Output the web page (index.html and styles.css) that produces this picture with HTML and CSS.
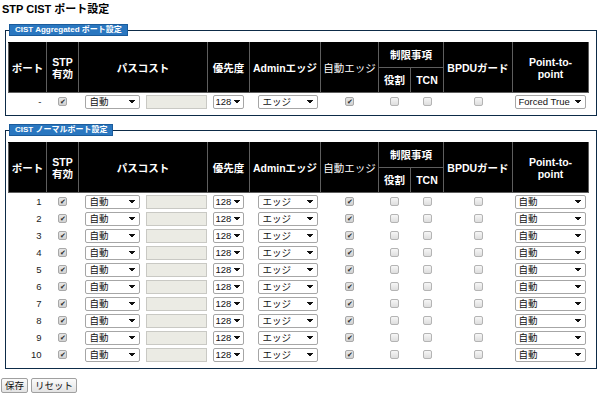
FILE: index.html
```html
<!DOCTYPE html>
<html lang="ja">
<head>
    <meta charset="UTF-8">
    <title>STP CIST ポート設定</title>
    <link rel="stylesheet" href="styles.css">
</head>
<body>
    <h1 class="page-title">STP CIST ポート設定</h1>

    <form class="stp-form">
        <fieldset class="port-group">
            <legend>CIST Aggregated ポート設定</legend>
            <table class="port-table">
                <colgroup>
                    <col class="c-port"><col class="c-stp"><col class="c-cost"><col class="c-prio"><col class="c-admin">
                    <col class="c-auto"><col class="c-role"><col class="c-tcn"><col class="c-bpdu"><col class="c-p2p">
                </colgroup>
                <thead>
                    <tr>
                        <th rowspan="2">ポート</th>
                        <th rowspan="2">STP<br>有効</th>
                        <th rowspan="2">パスコスト</th>
                        <th rowspan="2">優先度</th>
                        <th rowspan="2">Adminエッジ</th>
                        <th rowspan="2" class="th-light">自動エッジ</th>
                        <th colspan="2">制限事項</th>
                        <th rowspan="2">BPDUガード</th>
                        <th rowspan="2">Point-to-<br>point</th>
                    </tr>
                    <tr>
                        <th>役割</th>
                        <th>TCN</th>
                    </tr>
                </thead>
                <tbody>
                    <tr>
                        <td class="port-no">-</td>
                        <td class="chk"><input type="checkbox" checked></td>
                        <td class="cost"><select class="sel-cost"><option>自動</option><option>指定</option></select><input type="text" class="cost-value" disabled></td>
                        <td class="prio"><select class="sel-prio"><option>112</option><option selected>128</option><option>144</option></select></td>
                        <td class="admin"><select class="sel-admin"><option>エッジ</option><option>非エッジ</option></select></td>
                        <td class="chk"><input type="checkbox" checked></td>
                        <td class="chk"><input type="checkbox"></td>
                        <td class="chk"><input type="checkbox"></td>
                        <td class="chk"><input type="checkbox"></td>
                        <td class="p2p"><select class="sel-p2p"><option>自動</option><option selected>Forced True</option><option>Forced False</option></select></td>
                    </tr>
                </tbody>
            </table>
        </fieldset>

        <fieldset class="port-group">
            <legend>CIST ノーマルポート設定</legend>
            <table class="port-table">
                <colgroup>
                    <col class="c-port"><col class="c-stp"><col class="c-cost"><col class="c-prio"><col class="c-admin">
                    <col class="c-auto"><col class="c-role"><col class="c-tcn"><col class="c-bpdu"><col class="c-p2p">
                </colgroup>
                <thead>
                    <tr>
                        <th rowspan="2">ポート</th>
                        <th rowspan="2">STP<br>有効</th>
                        <th rowspan="2">パスコスト</th>
                        <th rowspan="2">優先度</th>
                        <th rowspan="2">Adminエッジ</th>
                        <th rowspan="2" class="th-light">自動エッジ</th>
                        <th colspan="2">制限事項</th>
                        <th rowspan="2">BPDUガード</th>
                        <th rowspan="2">Point-to-<br>point</th>
                    </tr>
                    <tr>
                        <th>役割</th>
                        <th>TCN</th>
                    </tr>
                </thead>
                <tbody id="normalPorts"></tbody>
            </table>
        </fieldset>

        <div class="form-actions">
            <button type="submit" class="btn">保存</button>
            <button type="reset" class="btn">リセット</button>
        </div>
    </form>

    <script>
        // Build rows for the normal ports
        const body = document.getElementById('normalPorts');
        for (let i = 1; i <= 10; i++) {
            const row = document.createElement('tr');
            row.innerHTML =
                '<td class="port-no">' + i + '</td>' +
                '<td class="chk"><input type="checkbox" checked></td>' +
                '<td class="cost"><select class="sel-cost"><option>自動</option><option>指定</option></select><input type="text" class="cost-value" disabled></td>' +
                '<td class="prio"><select class="sel-prio"><option>112</option><option selected>128</option><option>144</option></select></td>' +
                '<td class="admin"><select class="sel-admin"><option>エッジ</option><option>非エッジ</option></select></td>' +
                '<td class="chk"><input type="checkbox" checked></td>' +
                '<td class="chk"><input type="checkbox"></td>' +
                '<td class="chk"><input type="checkbox"></td>' +
                '<td class="chk"><input type="checkbox"></td>' +
                '<td class="p2p"><select class="sel-p2p"><option selected>自動</option><option>Forced True</option><option>Forced False</option></select></td>';
            body.appendChild(row);
        }
    </script>
</body>
</html>
```

FILE: styles.css
```css
body {
    margin: 0;
    padding: 0;
    background: #ffffff;
    color: #222222;
    font-family: "Liberation Sans", "Noto Sans CJK JP", sans-serif;
    font-size: 10px;
}

.page-title {
    margin: 0;
    padding: 2px 2px 0;
    font-size: 11px;
    line-height: 14px;
    font-weight: bold;
    color: #000000;
}

.port-group {
    margin: 8px 3px 0 5px;
    padding: 6px 9px 5px 2px;
    border: 1px solid #0d2b48;
    min-width: 0;
}

.port-group legend {
    margin-left: 1px;
    padding: 1px 5px;
    background: #2a77c0;
    border: 1px solid #1b5c9c;
    color: #ffffff;
    font-size: 8px;
    line-height: 8px;
    font-weight: bold;
}

.port-table {
    width: 580px;
    table-layout: fixed;
    border-collapse: collapse;
}

.c-port { width: 38px; }
.c-stp { width: 32px; }
.c-cost { width: 129px; }
.c-prio { width: 42px; }
.c-admin { width: 71px; }
.c-auto { width: 58px; }
.c-role { width: 32px; }
.c-tcn { width: 33px; }
.c-bpdu { width: 69px; }
.c-p2p { width: 76px; }

.port-table th {
    height: 24px;
    padding: 0;
    background: #000000;
    border: 1px solid #5e5e5e;
    color: #ffffff;
    font-size: 10.5px;
    line-height: 12px;
    font-weight: bold;
    white-space: nowrap;
    text-align: center;
    vertical-align: middle;
}

.port-table thead tr:first-child th {
    border-top-color: #000000;
}

.port-table th.th-light {
    font-weight: normal;
}

.port-table td {
    height: 17px;
    padding: 0;
    font-size: 9.5px;
    line-height: 12px;
    vertical-align: middle;
    white-space: nowrap;
}

.port-no {
    text-align: right;
    padding-right: 5px !important;
}

.chk {
    text-align: center;
}

.cost { padding-left: 6px !important; }
.prio { padding-left: 5px !important; }
.admin { padding-left: 8px !important; }
.p2p { padding-left: 2px !important; }

/* checkboxes */
.port-table input[type="checkbox"] {
    appearance: none;
    -webkit-appearance: none;
    position: relative;
    display: inline-block;
    width: 9px;
    height: 9px;
    margin: 0;
    vertical-align: middle;
    border: 1px solid #b4b4b4;
    border-radius: 2px;
    background: linear-gradient(#f6f6f6, #dedede);
}

.port-table input[type="checkbox"]:checked {
    border-color: #a8a8a8;
    background: linear-gradient(#e6e6e6, #d2d2d2);
}

.port-table input[type="checkbox"]:checked::after {
    content: "✔";
    position: absolute;
    left: 1px;
    top: -1px;
    font-size: 7px;
    line-height: 9px;
    color: #2a2a2a;
}

/* selects */
.port-table select {
    appearance: none;
    -webkit-appearance: none;
    height: 14px;
    margin: 0;
    padding: 0 0 0 4px;
    vertical-align: middle;
    border: 1px solid #a6a6a6;
    border-radius: 2px;
    background-color: #ffffff;
    background-image: linear-gradient(45deg, transparent 50%, #111 50%), linear-gradient(135deg, #111 50%, transparent 50%);
    background-position: right 7px top 4px, right 4px top 4px;
    background-size: 3px 4px;
    background-repeat: no-repeat;
    color: #111111;
    font-family: inherit;
    font-size: 9.5px;
    line-height: 12px;
}

.sel-cost { width: 55px; }
.sel-prio {
    width: 31px;
    padding-left: 2px !important;
    background-position: right 6px top 4px, right 3px top 4px !important;
}
.sel-admin { width: 60px; }
.sel-p2p { width: 71px; padding-left: 3px !important; }

.cost-value {
    width: 61px;
    height: 14px;
    margin: 0 0 0 6px;
    padding: 0;
    box-sizing: border-box;
    vertical-align: middle;
    border: 1px solid #c9c9c4;
    background: #ebebe4;
}

.form-actions {
    padding: 9px 0 0 1px;
    display: flex;
    gap: 3px;
}

.btn {
    height: 15px;
    margin: 0;
    padding: 0 3px;
    border: 1px solid #a0a0a0;
    border-radius: 2px;
    background: linear-gradient(#fbfbfb, #e3e3e3);
    color: #111111;
    font-family: inherit;
    font-size: 9.5px;
    line-height: 13px;
    cursor: pointer;
}
```
